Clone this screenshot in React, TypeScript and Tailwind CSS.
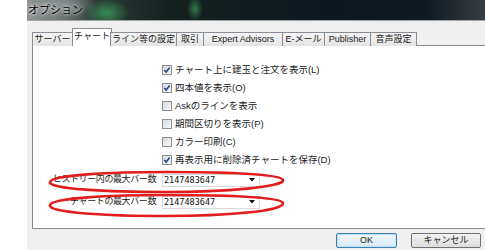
const tabs = [
  { label: "サーバー", w: "w-[41px]" },
  { label: "チャート", w: "w-[40px]", active: true },
  { label: "ライン等の設定", w: "w-[67px]" },
  { label: "取引", w: "w-[28px]" },
  { label: "Expert Advisors", w: "w-[80px]" },
  { label: "E-メール", w: "w-[43px]" },
  { label: "Publisher", w: "w-[47px]" },
  { label: "音声設定", w: "w-[47px]" },
];

const options = [
  { label: "チャート上に建玉と注文を表示(L)", checked: true },
  { label: "四本値を表示(O)", checked: true },
  { label: "Askのラインを表示", checked: false },
  { label: "期間区切りを表示(P)", checked: false },
  { label: "カラー印刷(C)", checked: false },
  { label: "再表示用に削除済チャートを保存(D)", checked: true },
];

function Check({ checked }: { checked: boolean }) {
  return (
    <span className="flex h-[10px] w-[10px] shrink-0 items-center justify-center border border-[#8e8f8f] bg-[linear-gradient(135deg,#d6d9de,#f8f9fa)]">
      {checked && (
        <svg width="8" height="8" viewBox="0 0 8 8">
          <path d="M1.3 4.1 L3.1 6 L6.7 1.5" fill="none" stroke="#2c4291" strokeWidth="1.6" />
        </svg>
      )}
    </span>
  );
}

function Combo({ label }: { label: string }) {
  return (
    <div className="flex h-[22px] items-center gap-[6px]">
      <span className="w-[123px] text-right text-[9px] tracking-[-0.4px]">{label}</span>
      <div className="flex h-[13px] w-[98px] items-center justify-between border border-[#d9d9d9] bg-white pl-[1px] pr-[4px]">
        <span className="font-['DejaVu_Sans_Mono',monospace] text-[8.5px] text-[#111]">2147483647</span>
        <svg width="6" height="4" viewBox="0 0 6 4">
          <path d="M0 0 H6 L3 3.5 Z" fill="#111" />
        </svg>
      </div>
    </div>
  );
}

export default function App() {
  return (
    <div className="flex h-[250px] w-[485px] overflow-hidden bg-white font-['Liberation_Sans','Noto_Sans_CJK_JP',sans-serif] text-[#1b1b1b]">
      <div className="w-[27px] shrink-0" />
      <div className="flex w-[470px] shrink-0 flex-col bg-[#f0f0f0]">
        {/* Aero title bar */}
        <div className="flex h-[21px] items-center border-b border-[#9aa3a6] bg-[radial-gradient(ellipse_22px_14px_at_80px_13px,rgba(60,170,95,0.75),transparent),radial-gradient(ellipse_8px_12px_at_168px_9px,rgba(70,180,100,0.6),transparent),radial-gradient(ellipse_30px_10px_at_40px_4px,rgba(200,210,210,0.35),transparent),linear-gradient(90deg,#8e9393_0px,#737a7a_30px,#2d3a37_70px,#15211f_140px,#0f1820_300px,#111a22_400px,#3e4547_470px)] pl-[1px]">
          <span className="text-[11px] text-black [text-shadow:0_0_6px_#fff,0_0_3px_#fff]">オプション</span>
        </div>

        <div className="px-[5px] pt-[7px]">
          {/* Tabs */}
          <div className="relative z-10 flex h-[18px] items-end">
            {tabs.map((t) =>
              t.active ? (
                <div
                  key={t.label}
                  className={`${t.w} -mx-[1px] flex h-[18px] items-center justify-center border border-b-0 border-[#898c95] bg-white pb-[1px] text-[9px]`}
                >
                  {t.label}
                </div>
              ) : (
                <div
                  key={t.label}
                  className={`${t.w} -ml-px flex h-[14px] items-center justify-center border border-b-0 border-[#898c95] bg-[linear-gradient(#f4f4f4,#e4e4e4)] text-[9px] first:ml-0`}
                >
                  {t.label}
                </div>
              )
            )}
          </div>

          {/* Tab panel */}
          <div className="relative -mt-px h-[184px] border border-[#898c95] bg-white pt-[15px]">
            <div className="flex flex-col pl-[129px]">
              {options.map((o) => (
                <div key={o.label} className="flex h-[18px] items-center gap-[3px]">
                  <Check checked={o.checked} />
                  <span className="text-[9.5px]">{o.label}</span>
                </div>
              ))}
            </div>
            <Combo label="ヒストリー内の最大バー数" />
            <Combo label="チャートの最大バー数" />

            {/* annotation marks */}
            <svg className="pointer-events-none absolute left-0 top-0" width="300" height="190">
              <path
                d="M17 136 C19 129 77 126 133 126 C192 126 248 128 250 134 C252 141 192 146 133 146 C75 146 15 143 17 136 Z"
                fill="none"
                stroke="#e11d1d"
                strokeWidth="2.6"
              />
              <path
                d="M17 159 C19 152 77 149 133 149 C192 149 248 151 250 157 C252 165 192 170 133 170 C75 170 15 167 17 159 Z"
                fill="none"
                stroke="#e11d1d"
                strokeWidth="2.6"
              />
            </svg>
          </div>
        </div>

        {/* Buttons */}
        <div className="mt-[4px] flex justify-end gap-[14px] pr-[16px]">
          <button className="flex h-[15px] w-[61px] items-center justify-center rounded-[2px] border border-[#3c7fb1] bg-[linear-gradient(#f2f8fc,#d6eaf7)] text-[9px] text-[#1b1b1b] shadow-[inset_0_0_0_1px_#bfe0f5]">
            OK
          </button>
          <button className="flex h-[15px] w-[70px] items-center justify-center rounded-[2px] border border-[#707070] bg-[linear-gradient(#f2f2f2,#dddddd)] text-[9px] text-[#1b1b1b]">
            キャンセル
          </button>
        </div>
      </div>
    </div>
  );
}
